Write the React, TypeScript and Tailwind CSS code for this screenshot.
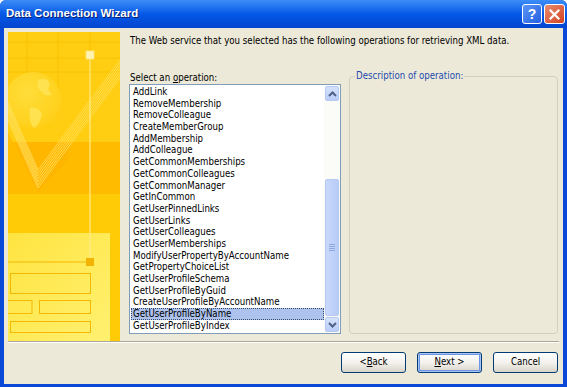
const FONT = "font-['DejaVu_Sans_Condensed','Liberation_Sans',Arial,sans-serif]";

const OPERATIONS = [
  "AddLink",
  "RemoveMembership",
  "RemoveColleague",
  "CreateMemberGroup",
  "AddMembership",
  "AddColleague",
  "GetCommonMemberships",
  "GetCommonColleagues",
  "GetCommonManager",
  "GetInCommon",
  "GetUserPinnedLinks",
  "GetUserLinks",
  "GetUserColleagues",
  "GetUserMemberships",
  "ModifyUserPropertyByAccountName",
  "GetPropertyChoiceList",
  "GetUserProfileSchema",
  "GetUserProfileByGuid",
  "CreateUserProfileByAccountName",
  "GetUserProfileByName",
  "GetUserProfileByIndex",
];

const SELECTED = "GetUserProfileByName";

function WizardArt() {
  const stripes = [0, 1, 2, 3, 4, 5, 6];
  return (
    <svg width="112" height="309" viewBox="0 0 112 309" className="block">
      <defs>
        <linearGradient id="panel" x1="0" y1="0" x2="1" y2="1">
          <stop offset="0" stopColor="#FFE440" />
          <stop offset="1" stopColor="#FFF070" />
        </linearGradient>
        <radialGradient id="globe" cx="0.4" cy="0.35" r="0.7">
          <stop offset="0" stopColor="#FFE040" />
          <stop offset="1" stopColor="#FFD01A" />
        </radialGradient>
      </defs>
      <rect width="112" height="309" fill="#FFCA06" />
      <rect width="112" height="110" fill="#FFCD12" />
      {[19, 50, 82].map((x) => (
        <line key={x} x1={x} y1="0" x2={x} y2="60" stroke="#F9C200" strokeWidth="1" />
      ))}
      {[10, 26, 40].map((y) => (
        <line key={y} x1="0" y1={y} x2="112" y2={y} stroke="#F9C200" strokeWidth="1" />
      ))}
      <rect x="0" y="110" width="112" height="52" fill="#FFBB00" />
      <polygon points="0,100 30,160 60,128 60,110 0,110" fill="#FFB200" opacity="0.6" />
      <circle cx="25" cy="68" r="28" fill="url(#globe)" opacity="0.85" />
      <path d="M30 48 q8 -4 12 4 q-4 6 2 10 q-6 4 -10 -2 q-6 -4 -4 -12z" fill="#FFE55A" opacity="0.8" />
      <path d="M22 76 q8 -2 12 6 q-2 10 -8 14 q-6 -6 -4 -20z" fill="#FFE55A" opacity="0.8" />
      {stripes.map((i) => (
        <polyline
          key={i}
          points={`0,${70 + 3 * i} 30,${138 + 3 * i} 112,${28 + 3 * i}`}
          fill="none"
          stroke="#FFE46A"
          strokeWidth="0.9"
          opacity="0.8"
        />
      ))}
      <rect x="0" y="201" width="102" height="108" fill="url(#panel)" />
      <line x1="82" y1="24" x2="82" y2="230" stroke="#FFEB8C" strokeWidth="1.2" />
      <rect x="78" y="19" width="8" height="8" fill="#FFF3B4" stroke="#FFE27A" strokeWidth="0.8" />
      <line x1="0" y1="230" x2="80" y2="230" stroke="#F5B700" strokeWidth="1" />
      <rect x="78" y="226" width="8" height="8" fill="#F4B300" />
      <rect x="2.5" y="241.5" width="80" height="20" fill="none" stroke="#F4B800" strokeWidth="1" />
      <rect x="-1" y="268.5" width="25" height="13" fill="none" stroke="#F4B800" strokeWidth="1" />
      <rect x="31.5" y="268.5" width="51" height="13" fill="none" stroke="#F4B800" strokeWidth="1" />
      <rect x="2.5" y="289.5" width="80" height="11" fill="none" stroke="#F4B800" strokeWidth="1" />
    </svg>
  );
}

function Chevron({ up }: { up?: boolean }) {
  return (
    <svg width="9" height="6" viewBox="0 0 9 6">
      <polyline
        points={up ? "1,5 4.5,1.5 8,5" : "1,1 4.5,4.5 8,1"}
        fill="none"
        stroke="#4D6185"
        strokeWidth="2"
      />
    </svg>
  );
}

function ScrollButton({ up }: { up?: boolean }) {
  return (
    <div className="h-[15px] flex items-center justify-center rounded-[2px] border border-[#B6C9F3] bg-gradient-to-b from-[#D6E2FC] to-[#B9CCF8]">
      <Chevron up={up} />
    </div>
  );
}

function XpButton({ children, isDefault }: { children: React.ReactNode; isDefault?: boolean }) {
  return (
    <div
      className={`w-[65px] h-[21px] rounded-[3px] border border-[#003C74] bg-gradient-to-b from-[#FFFFFF] via-[#F3F2EE] to-[#D9D4C8] flex items-center justify-center text-[9.6px] text-black ${
        isDefault ? "shadow-[inset_0_0_0_1px_#A9C3F2,inset_0_0_0_2px_#6B93E6]" : ""
      }`}
    >
      {children}
    </div>
  );
}

export default function App() {
  return (
    <div className={`w-[567px] h-[387px] flex flex-col bg-[#0A48D8] rounded-t-[6px] overflow-hidden ${FONT}`}>
      <div className="h-[28px] shrink-0 flex items-center pl-[6px] bg-gradient-to-b from-[#3C8DF8] via-[#0458E6] to-[#0345D0]">
        <span className="text-white font-bold text-[11.5px] font-['Liberation_Sans',Arial,sans-serif] [text-shadow:1px_1px_0_#0A1E72]">
          Data Connection Wizard
        </span>
        <div className="ml-auto mr-[2px] flex items-center gap-[2px]">
          <div className="w-[20px] h-[20px] rounded-[3px] border border-white bg-gradient-to-br from-[#5C95F6] to-[#2560E0] flex items-center justify-center text-white font-bold text-[14px] leading-none font-['Liberation_Sans',Arial,sans-serif]">
            ?
          </div>
          <div className="w-[21px] h-[20px] rounded-[3px] border border-white bg-gradient-to-br from-[#EA8A6E] to-[#D2401C] flex items-center justify-center">
            <svg width="11" height="11" viewBox="0 0 11 11">
              <path d="M1.5 1.5 L9.5 9.5 M9.5 1.5 L1.5 9.5" stroke="white" strokeWidth="2.2" strokeLinecap="square" />
            </svg>
          </div>
        </div>
      </div>

      <div className="flex-1 mx-[4px] mb-[3px] bg-[#ECE9D8] flex flex-col px-[4px] pt-[4px]">
        <div className="h-[309px] flex">
          <WizardArt />
          <div className="ml-[9px] flex-1 flex flex-col">
            <div className="mt-[3px] pl-[1px] text-[9.6px] leading-[12px] text-black">
              The Web service that you selected has the following operations for retrieving XML data.
            </div>
            <div className="mt-[25px] flex">
              <div className="w-[212px] flex flex-col">
                <div className="pl-[1px] text-[9.6px] leading-[12px] text-black">
                  Select an <span className="underline">o</span>peration:
                </div>
                <div className="h-[250px] border border-[#7F9DB9] bg-white flex">
                  <div className="flex-1 pt-[1px] flex flex-col">
                    {OPERATIONS.map((op) => (
                      <div
                        key={op}
                        className={`ml-[1px] pl-[2px] text-[9.6px] leading-[11.7px] h-[11.7px] text-black whitespace-nowrap ${
                          op === SELECTED ? "bg-[#ADC2EC] outline-1 outline-dotted outline-[#3A4A6A] -outline-offset-1" : ""
                        }`}
                      >
                        {op}
                      </div>
                    ))}
                  </div>
                  <div className="w-[16px] flex flex-col p-[1px] bg-[#FBFBF8]">
                    <ScrollButton up />
                    <div className="h-[78px]" />
                    <div className="flex-1 rounded-[2px] border border-[#B6C9F3] bg-gradient-to-r from-[#C9D8FC] to-[#B8CCF8] flex flex-col items-center justify-center gap-[1px]">
                      <div className="w-[6px] h-px bg-[#8EA7DE]" />
                      <div className="w-[6px] h-px bg-[#8EA7DE]" />
                      <div className="w-[6px] h-px bg-[#8EA7DE]" />
                      <div className="w-[6px] h-px bg-[#8EA7DE]" />
                    </div>
                    <div className="mt-[1px]">
                      <ScrollButton />
                    </div>
                  </div>
                </div>
              </div>
              <div className="ml-[8px] w-[209px] mt-[4px] h-[258px] relative border border-[#D0D0BF] rounded-[4px]">
                <span className="absolute -top-[7px] left-[5px] px-[1px] bg-[#ECE9D8] text-[9.6px] leading-[12px] text-[#1F4BAE]">
                  Description of operation:
                </span>
              </div>
            </div>
          </div>
        </div>
        <div className="border-t border-[#ACA899] border-b border-b-white" />
        <div className="mt-[9px] flex justify-end gap-[11px] pr-[1px]">
          <XpButton>
            &lt; <span className="underline">B</span>ack
          </XpButton>
          <XpButton isDefault>
            <span className="underline">N</span>ext &gt;
          </XpButton>
          <XpButton>Cancel</XpButton>
        </div>
      </div>
    </div>
  );
}
